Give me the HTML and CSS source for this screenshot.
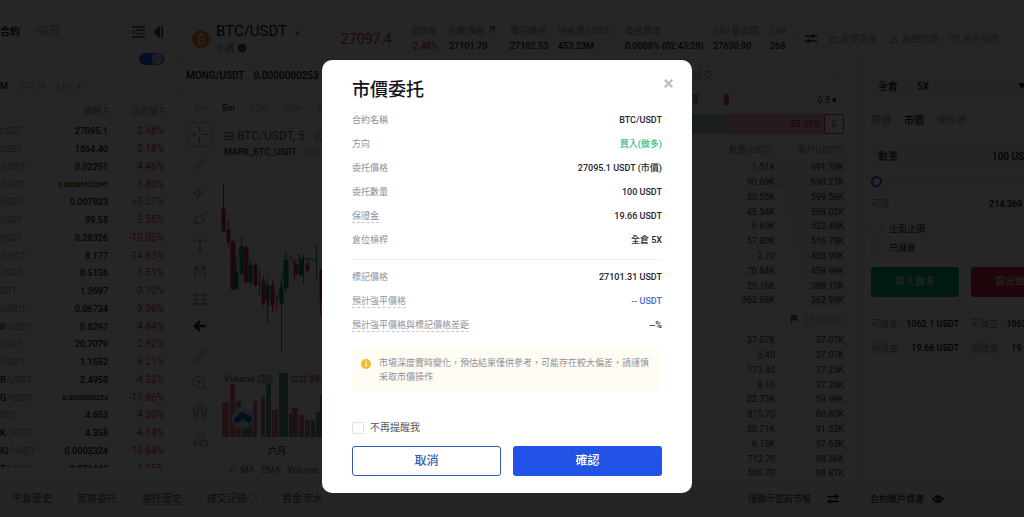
FILE: index.html
```
<!DOCTYPE html>
<html lang="zh-Hant">
<head>
<meta charset="utf-8">
<meta name="viewport" content="width=device-width, initial-scale=1">
<title>BTC/USDT</title>
<link rel="stylesheet" href="styles.css">
</head>
<body>
<div class="app">
  <div class="upper">
    <aside class="markets">
      <div class="markets-top">
        <b>合約</b><span class="muted">借貸</span>
        <svg class="icon push" width="13" height="12" viewBox="0 0 13 12" fill="none" stroke="currentColor" stroke-width="1.4"><path d="M0 1h13M5 4.3h8M5 7.6h8M0 11h13M3 4L0 6l3 2"/></svg>
        <svg class="icon" width="10" height="12" viewBox="0 0 10 12" fill="currentColor"><path d="M7 0v12L0 6zM8.400 0H10v12H8.400z"/></svg>
      </div>
      <div class="markets-switch"><input type="checkbox" class="switch" aria-label="合約列表" checked></div>
      <div class="markets-kinds"><b>M</b><span>BTC-M</span><span>LIVE ▾</span></div>
      <table class="market-table">
        <thead><tr><th></th><th>價格 <svg width="4" height="8" viewBox="0 0 4 8" fill="currentColor"><path d="M2 0l2 3H0zM2 8L0 5h4z"/></svg></th><th>漲跌幅 <svg width="4" height="8" viewBox="0 0 4 8" fill="currentColor"><path d="M2 0l2 3H0zM2 8L0 5h4z"/></svg></th></tr></thead>
        <tbody>
          <tr><td>USDT</td><td>27095.1</td><td>-2.48%</td></tr>
          <tr><td>USDT</td><td>1864.40</td><td>-2.18%</td></tr>
          <tr><td>/USDT</td><td>0.02251</td><td>-4.46%</td></tr>
          <tr><td>/USDT</td><td class="long">0.00000123395</td><td>-3.80%</td></tr>
          <tr><td>USDT</td><td>0.007923</td><td class="up">+5.37%</td></tr>
          <tr><td>USDT</td><td>89.58</td><td>-2.55%</td></tr>
          <tr><td>USDT</td><td>0.28326</td><td>-10.05%</td></tr>
          <tr><td>/USDT</td><td>8.177</td><td>-14.63%</td></tr>
          <tr><td>USDT</td><td>0.5136</td><td>-1.51%</td></tr>
          <tr><td>SDT</td><td>1.3697</td><td>-3.70%</td></tr>
          <tr><td>/USDT</td><td>0.06734</td><td>-3.36%</td></tr>
          <tr><td><b>II</b>/USDT</td><td>0.8297</td><td>-4.84%</td></tr>
          <tr><td>USDT</td><td>20.7079</td><td>-2.92%</td></tr>
          <tr><td>/USDT</td><td>1.1552</td><td>-6.21%</td></tr>
          <tr><td><b>R</b>/USDT</td><td>2.4950</td><td>-4.22%</td></tr>
          <tr><td><b>G</b>/USDT</td><td class="long">0.0000000253</td><td>-17.86%</td></tr>
          <tr><td>SDT</td><td>4.653</td><td>-4.20%</td></tr>
          <tr><td><b>K</b>/USDT</td><td>4.358</td><td>-4.14%</td></tr>
          <tr><td><b>IO</b>/USDT</td><td>0.0002324</td><td>-16.64%</td></tr>
          <tr><td><b>T</b>/USDT</td><td>0.071643</td><td>-6.25%</td></tr>
        </tbody>
      </table>
    </aside>

    <main class="workspace">
      <header class="ticker">
        <svg class="coin" width="18" height="18" viewBox="0 0 18 18"><circle cx="9" cy="9" r="9" fill="#f7931a"/><path d="M6.500 5h3.800a1.900 1.900 0 0 1 0 3.900H7.300m3 0a2.100 2.100 0 0 1 0 4.200H6M7.500 5v8M8.200 3.500V5M10 3.500V5M8 13v1.500M9.800 13v1.500" fill="none" stroke="#fff" stroke-width="1.300"/></svg>
        <div class="pair">
          <div class="pair-name">BTC/USDT <small>▾</small></div>
          <div class="pair-kind">永續 <svg width="8" height="8" viewBox="0 0 8 8"><circle cx="4" cy="4" r="4" fill="#333"/><path d="M4 1.500v1M4 3.500v3" stroke="#fff"/></svg></div>
        </div>
        <div class="last">27097.4</div>
        <dl class="stats">
          <div><dt>漲跌幅</dt><dd class="down">-2.48%</dd></div>
          <div><dt>指數價格 <svg width="8" height="8" viewBox="0 0 8 8" fill="none" stroke="#222"><path d="M1 7l6-6M2 1h5v5"/></svg></dt><dd>27101.70</dd></div>
          <div><dt>標記價格</dt><dd>27102.53</dd></div>
          <div><dt>持倉量(USDT)</dt><dd>453.23M</dd></div>
          <div><dt>資金費率</dt><dd>0.0088% (02:43:28)</dd></div>
          <div><dt>24H 最高價</dt><dd>27630.90</dd></div>
          <div><dt>24H</dt><dd>268</dd></div>
        </dl>
        <nav class="links">
          <span class="chevron">›</span>
          <svg class="icon" width="12" height="11" viewBox="0 0 12 11" fill="none" stroke="#333" stroke-width="1.400"><path d="M0 3h12M0 8h12M8 .5v5M4 5.500v5"/></svg>
          <a href="#"><svg width="8" height="8" viewBox="0 0 8 8" fill="none" stroke="currentColor"><path d="M.5 1v6.500h7V1M2.500.5v3h3v-3"/></svg>跟單交易</a>
          <a href="#"><svg width="9" height="8" viewBox="0 0 9 8" fill="none" stroke="currentColor"><path d="M4.500 1L8.300 7.500H.7zM4.500 3.500v2"/></svg>風險限額</a>
          <a href="#"><svg width="9" height="9" viewBox="0 0 9 9" fill="none" stroke="currentColor"><circle cx="4.500" cy="4.500" r="4"/><path d="M3 6l1-2.500L6.200 3 5.200 5z"/></svg>用戶指南</a>
        </nav>
      </header>

      <div class="panels">
        <section class="chart">
          <div class="notice"><span>MONG/USDT</span><span>0.0000000253</span></div>
          <div class="frames"><span>1m</span><b>5m</b><span>15m</span><span>30m</span><span>1h</span></div>
          <div class="chart-body">
            <div class="tools">
              <svg class="boxed" viewBox="0 0 24 24"><path d="M12 3v6M12 15v6M3 12h6M15 12h6"/></svg>
              <svg viewBox="0 0 24 24"><path d="M5 19L19 5"/></svg>
              <svg viewBox="0 0 24 24"><path d="M4 17L16 5M8 20L20 8M5 8l10 10M4 13l6 6"/></svg>
              <svg viewBox="0 0 24 24"><path d="M5 19l2-8 6-2 4 4-3 5zM14 9l5-5"/></svg>
              <svg viewBox="0 0 24 24"><path d="M6 8V6h12v2M12 6v13M9 19h6"/></svg>
              <svg viewBox="0 0 24 24"><path d="M5 19L8 6l4 7 4-7 3 13"/><circle cx="8" cy="6" r="1.500"/><circle cx="16" cy="6" r="1.500"/></svg>
              <svg viewBox="0 0 24 24"><path d="M3 7h18M3 13h18M3 18h18M7 4v15M17 4v15"/></svg>
              <svg class="strong" viewBox="0 0 24 24"><path d="M19 12H7M12 6l-6 6 6 6"/></svg>
              <svg class="ruled" viewBox="0 0 24 24"><path d="M4 17L17 4l3 3L7 20zM8 13l2 2M12 9l2 2"/></svg>
              <svg viewBox="0 0 24 24"><circle cx="11" cy="11" r="7"/><path d="M16 16l4 4M8 11h6M11 8v6"/></svg>
              <svg class="ruled" viewBox="0 0 24 24"><path d="M5 19V10a7 7 0 0 1 14 0v9h-4v-9a3 3 0 0 0-6 0v9zM5 15h4M15 15h4"/></svg>
              <svg viewBox="0 0 24 24"><path d="M4 19l1-5L15 4l3 3L8 17zM14 13h6v6h-8z"/></svg>
            </div>
            <div class="plot">
              <div class="legend">
                <div class="legend-pair">⊟ BTC/USDT, 5 <span>⊡</span></div>
                <div class="legend-mark">MARK_BTC_USDT <span>⊡⊡</span></div>
              </div>
              <svg class="candles" width="120" height="320" viewBox="213 120 120 320">
                <path d="M222 258H310M222 346H330M222 440H330" stroke="#e8e8ee" fill="none"/>
                <g stroke="#c92a45" fill="#c92a45">
                  <path d="M221.500 184v46M226.500 220v28M230.500 240v50M243.500 246v38M248.500 260v25M253.500 262v25M261.500 276v30M266.500 284v22M270.500 280v32M274.500 298v12M292.500 258v22M297.500 254v22M305.500 258v14M318.500 270v45"/>
                  <path d="M220 209h3v22h-3zM225 230h3v12h-3zM229 242h4v47h-4zM242 247h4v35h-4zM252 265h3v20h-3zM260 281h3v22h-3zM269 285h3v20h-3zM292 265h4v9h-4zM304 265h3v5h-3zM318 270h4v31h-4z"/>
                </g>
                <g stroke="#0b8a68" fill="#0b8a68">
                  <path d="M234.500 265v24M239.500 236v40M257.500 270v24M265.500 278v45M279.500 278v75M283.500 252v40M301.500 254v30M314.500 244v35"/>
                  <path d="M233 272h3v17h-3zM238 247h3v26h-3zM247 265h3v17h-3zM264 286h3v14h-3zM278 288h3v16h-3zM282 260h4v28h-4zM298 260h3v15h-3z"/>
                </g>
                <path d="M230 280L239 245L244 262L256 284L268 287L276 300L284 256H288L292 264L300 258L316 260" fill="none" stroke="#2684c8"/>
                <g fill="#d87a87">
                  <path d="M220 402h7v35h-7zM228 384h5v53h-5zM234 401h5v36h-5zM251 401h4v36h-4zM259 397h4v40h-4zM270 410h6v27h-6zM290 408h6v29h-6zM297 415h5v22h-5zM303 420h5v17h-5zM318 395h4v42h-4z"/>
                </g>
                <g fill="#5c9c8c"><path d="M240 412h10v25h-10zM264 383h5v54h-5zM277 373h9v64h-9zM287 414h3v23h-3zM309 420h4v17h-4zM314 412h4v25h-4z"/></g>
                <circle cx="241" cy="418" r="11" fill="#dfe4ee"/>
                <path d="M236 423a3.500 3.500 0 0 1-.5-7 5.500 5.500 0 0 1 10-1 4 4 0 0 1 1 8l-5.500-4z" fill="#1464c8"/>
              </svg>
              <div class="volume-label"><span>Volume (20)</span><span>⊡⊡ <b class="down">89.</b></span></div>
              <div class="month">六月</div>
              <div class="indicators"><span>&lt;</span><span>MA</span><span>EMA</span><span>Volume</span><span>MACD</span></div>
            </div>
          </div>
        </section>

        <section class="book">
          <div class="book-tabs"><span>成交</span><span>⋮</span></div>
          <div class="book-tools"><i class="sw green"></i><i class="sw"></i><span>0.5 ▾</span></div>
          <div class="ratio"><i></i><b>58.98%</b><em>S</em></div>
          <table class="book-table">
            <thead><tr><th>數量(USDT)</th><th>累計(USDT)</th></tr></thead>
            <tbody class="asks">
              <tr style="--depth:68px"><td>1.51K</td><td>691.78K</td></tr>
              <tr style="--depth:68px"><td>90.69K</td><td>690.27K</td></tr>
              <tr style="--depth:59px"><td>30.55K</td><td>599.58K</td></tr>
              <tr style="--depth:56px"><td>45.54K</td><td>569.02K</td></tr>
              <tr style="--depth:52px"><td>6.69K</td><td>523.48K</td></tr>
              <tr style="--depth:51px"><td>57.80K</td><td>516.79K</td></tr>
              <tr style="--depth:45px"><td>2.70</td><td>458.99K</td></tr>
              <tr style="--depth:45px"><td>70.84K</td><td>458.99K</td></tr>
              <tr style="--depth:38px"><td>25.16K</td><td>388.15K</td></tr>
              <tr style="--depth:36px"><td>362.98K</td><td>362.98K</td></tr>
            </tbody>
          </table>
          <div class="book-mark"><svg width="9" height="9" viewBox="0 0 9 9" fill="#666"><path d="M1 0h7L6.500 2.700 8 5.500H2V9H1z"/></svg>27102.53</div>
          <table class="book-table">
            <tbody class="bids">
              <tr><td>37.07K</td><td>37.07K</td></tr>
              <tr><td>5.40</td><td>37.07K</td></tr>
              <tr><td>173.40</td><td>37.25K</td></tr>
              <tr><td>8.10</td><td>37.26K</td></tr>
              <tr><td>22.73K</td><td>59.99K</td></tr>
              <tr><td>815.70</td><td>60.80K</td></tr>
              <tr><td>30.71K</td><td>91.52K</td></tr>
              <tr><td>6.13K</td><td>97.65K</td></tr>
              <tr><td>712.70</td><td>98.36K</td></tr>
              <tr><td>506.70</td><td>98.87K</td></tr>
            </tbody>
          </table>
        </section>

        <section class="trade">
          <form class="trade-form">
            <div class="mode"><b>全倉</b><i></i><b>5X</b><span>▼</span></div>
            <div class="order-kinds"><span>限價</span><b>市價</b><span>條件單</span></div>
            <label class="amount"><span>數量</span><input type="text" value="100 USDT"></label>
            <input class="slider" type="range" min="0" max="100" value="0" aria-label="倉位比例">
            <div class="pairline avail"><span>可用</span><b>214.369 USDT</b></div>
            <label class="opt"><input type="checkbox"><span>止盈止損</span></label>
            <label class="opt"><input type="checkbox"><span>只減倉</span></label>
            <div class="sides"><button type="button" class="buy">買入做多</button><button type="button" class="sell">賣出做空</button></div>
            <div class="limits">
              <div class="pairline"><span>可做多</span><b>1062.1 USDT</b></div>
              <div class="pairline"><span>可做空</span><b>1062.1 USDT</b></div>
              <div class="pairline"><u>保證金</u><b>19.66 USDT</b></div>
              <div class="pairline"><u>保證金</u><b>19.66 USDT</b></div>
            </div>
          </form>
        </section>
      </div>
    </main>
  </div>

  <footer class="dock">
    <nav class="dock-tabs"><span>平倉歷史</span><span>當前委托</span><u>委托歷史</u><span>成交記錄◇</span><span>資金流水</span></nav>
    <div class="dock-filter"><label><input type="checkbox">僅顯示當前市場</label>
      <svg width="12" height="10" viewBox="0 0 12 10" fill="none" stroke="#000" stroke-width="1.500"><path d="M0 2.500h12M0 7.500h12M9 0v5M3 5v5"/></svg>
    </div>
    <div class="dock-assets">合約賬戶資產
      <svg width="12" height="8" viewBox="0 0 12 8" fill="none" stroke="#000" stroke-width="1.300"><path d="M1 4q5-6.500 10 0-5 6.500-10 0z"/><circle cx="6" cy="4" r="1.500"/></svg>
    </div>
  </footer>
</div>

<div class="overlay">
  <section class="dialog" role="dialog" aria-modal="true" aria-labelledby="dialog-title">
    <button type="button" class="close" aria-label="關閉"><svg width="9" height="9" viewBox="0 0 9 9" fill="none" stroke="currentColor" stroke-width="2"><path d="M.7.7l7.600 7.600M8.300.7L.7 8.300"/></svg></button>
    <h1 id="dialog-title">市價委托</h1>
    <dl class="details">
      <div><dt>合約名稱</dt><dd>BTC/USDT</dd></div>
      <div><dt>方向</dt><dd class="buy-side">買入(做多)</dd></div>
      <div><dt>委托價格</dt><dd>27095.1 USDT (市價)</dd></div>
      <div><dt>委托數量</dt><dd>100 USDT</dd></div>
      <div><dt><span class="hint">保證金</span></dt><dd>19.66 USDT</dd></div>
      <div><dt>倉位槓桿</dt><dd>全倉 5X</dd></div>
    </dl>
    <dl class="details estimate">
      <div><dt>標記價格</dt><dd>27101.31 USDT</dd></div>
      <div><dt><span class="hint">預計強平價格</span></dt><dd class="link">-- USDT</dd></div>
      <div><dt><span class="hint">預計強平價格與標記價格差距</span></dt><dd>--%</dd></div>
    </dl>
    <div class="warning">
      <svg width="10" height="10" viewBox="0 0 10 10"><circle cx="5" cy="5" r="5" fill="#f5b92e"/><path d="M5 2v1.200M5 4.200V8" stroke="#fff" stroke-width="1.200"/></svg>
      <p>市場深度實時變化，預估結果僅供參考，可能存在較大偏差，請謹慎采取市價操作</p>
    </div>
    <label class="remember"><input type="checkbox">不再提醒我</label>
    <div class="actions"><button type="button" class="cancel">取消</button><button type="button" class="confirm">確認</button></div>
  </section>
</div>
</body>
</html>
```
FILE: styles.css
```
* { box-sizing: border-box; }
body, h1, dl, dd, p { margin: 0; }
body {
  height: 100vh;
  overflow: hidden;
  font: 9px/12px Roboto, "Noto Sans CJK TC", sans-serif;
  color: #111;
  background: #fff;
}
button, input { font: inherit; color: inherit; }
b { font-weight: 500; }
svg { flex: none; }
a { color: inherit; text-decoration: none; }
u { text-decoration: underline dotted; text-underline-offset: 2px; }
table { border-collapse: collapse; table-layout: fixed; }
td, th { padding: 0; text-align: right; white-space: nowrap; font-weight: 400; }
input[type="checkbox"] {
  appearance: none;
  flex: none;
  width: 12px;
  height: 12px;
  margin: 0;
  border: 1px solid #dfe1e8;
  border-radius: 1px;
}
.muted { color: #a4a6b2; }
.down { color: #d02c48; }

/* page */
.app { display: flex; flex-direction: column; height: 100vh; padding-top: 18px; white-space: nowrap; }
.upper { flex: 1; display: flex; min-height: 0; }

/* market list */
.markets { flex: 0 0 179px; overflow: hidden; margin-bottom: 12px; }
.markets-top { display: flex; align-items: center; height: 28px; gap: 8px; padding-right: 16px; font-size: 11px; }
.markets-top b { font-size: 10px; font-weight: 700; }
.markets-top .muted { margin-left: 10px; }
.push { margin-left: auto; }
.icon { color: #444; }
.markets-switch { display: flex; justify-content: flex-end; align-items: center; height: 26px; padding-right: 15px; }
input.switch { width: 25px; height: 12px; border: 0; border-radius: 6px; background: radial-gradient(circle at 18px 6px, #c4cee8 5px, #1b57ee 6px); }
.markets-kinds { display: flex; align-items: center; gap: 11px; height: 28px; color: #a4a6b2; }
.markets-kinds b { color: #111; }
.market-table { width: 164px; }
.market-table th { height: 22px; color: #888b99; }
.market-table th:nth-child(1) { width: 38px; }
.market-table th:nth-child(2) { width: 70px; }
.market-table td { height: 18px; line-height: 12px; }
.market-table tr:nth-child(4n) td { height: 17px; }
.market-table td:nth-child(1) { text-align: left; color: #8e919d; }
.market-table td:nth-child(1) b { color: #111; }
.market-table td:nth-child(2) { font-weight: 500; }
.market-table td:nth-child(3) { font-size: 10px; color: #d02c48; }
.market-table tr > td.up { color: #0b9b74; }
.market-table tr > td.long { font-size: 7px; }

/* ticker */
.workspace { flex: 1; min-width: 0; display: flex; flex-direction: column; border-left: 1px solid #ececf2; }
.ticker { display: flex; align-items: center; height: 42px; padding-left: 12px; border-bottom: 1px solid #ececf2; overflow: hidden; flex: none; }
.pair { margin-left: 6px; width: 125px; }
.pair-name { font-size: 15px; line-height: 17px; }
.pair-name small { font-size: 9px; color: #777; margin-left: 4px; }
.pair-kind { display: flex; align-items: center; gap: 4px; line-height: 12px; color: #888b99; }
.last { width: 69px; font-size: 14px; color: #d02c48; }
.stats { display: grid; grid-template-columns: 39px 61px 48px 67px 88px 57px 16px; overflow: hidden; }
.stats dt { line-height: 14px; color: #888b99; }
.stats dd { line-height: 16px; font-weight: 500; }
.links { display: flex; align-items: center; gap: 13px; padding-left: 6px; color: #888b99; }
.links a { display: flex; align-items: center; gap: 3px; }
.chevron { width: 4px; margin-right: -4px; font-size: 12px; }

.panels { flex: 1; display: flex; min-height: 0; }

/* chart */
.chart { flex: 1; min-width: 0; overflow: hidden; }
.notice { display: flex; align-items: center; gap: 9px; height: 33px; padding-left: 6px; border-bottom: 1px solid #ececf2; font-size: 10px; font-weight: 500; }
.frames { display: flex; align-items: center; gap: 15px; height: 29px; padding-left: 14px; color: #a4a6b2; }
.frames b { color: #111; }
.chart-body { display: flex; }
.tools { flex: 0 0 34px; display: flex; flex-direction: column; align-items: center; gap: 7px; padding-right: 2px; border-right: 1px solid #f3f3f6; padding-left: 7px; }
.tools svg { width: 20px; height: 20px; fill: none; stroke: #777a85; stroke-width: 1.2; }
.tools .boxed { width: 25px; height: 25px; border: 1px solid #c8cad2; border-radius: 2px; }
.tools .strong { stroke: #222; stroke-width: 3; }
.tools .ruled { margin-top: 3px; }
.plot { position: relative; flex: 1; overflow: hidden; }
.candles { display: block; margin-top: -2px; }
.legend { position: absolute; top: 6px; left: 9px; }
.legend-pair { font-size: 12px; line-height: 16px; color: #555; }
.legend-mark { line-height: 16px; font-weight: 500; color: #333; }
.legend span { color: #999; margin-left: 6px; }
.volume-label { position: absolute; top: 251px; left: 9px; display: flex; gap: 18px; color: #444; }
.month { padding: 5px 0 0 53px; }
.indicators { display: flex; gap: 7px; padding: 7px 0 0 14px; color: #555; }

/* order book */
.book { flex: 0 0 178px; padding: 0 13px 0 8px; border-right: 1px solid #e6e6f0; display: flex; flex-direction: column; }
.book-tabs, .book-tools { display: flex; justify-content: space-between; align-items: center; color: #a4a6b2; }
.book-tabs { height: 34px; padding: 1px 4px 0 5px; font-size: 10px; }
.book-tools { height: 18px; gap: 26px; padding-right: 7px; color: #111; }
.book-tools span { margin-left: auto; }
.sw { width: 5px; height: 11px; margin-left: 5px; background: #c8606e; }
.sw.green { background: #7db0a4; }
.book-tools .sw + .sw { margin-left: 0; }
.ratio { display: flex; align-items: stretch; height: 20px; margin-top: 6px; line-height: 20px; background: linear-gradient(to right, #a8d0c5 36px, #ecb4bc 38px); color: #d02c48; }
.ratio i { flex: 1; }
.ratio b { margin-right: 4px; }
.ratio em { width: 20px; line-height: 18px; text-align: center; font-style: normal; border: 1px solid #d02c48; border-radius: 2px; background: #fff; }
.book-table { width: 100%; color: #333; }
.book-table th { height: 25px; line-height: 12px; padding-top: 8px; padding-bottom: 2px; color: #888b99; }
.book-table td { height: 15px; line-height: 12px; }
.book-table tr:nth-child(5n) td { height: 14px; }
.book-table tr > :first-child { width: 87px; }
.asks tr { background: linear-gradient(#fceef1, #fceef1) right / var(--depth) 100% no-repeat; }
.book-mark { display: flex; justify-content: flex-end; align-items: center; gap: 5px; height: 27px; padding-right: 2px; color: #a4a6b2; }

/* order form */
.trade { flex: 0 0 166px; overflow: hidden; padding-left: 3px; border-left: 1px solid #ececf2; }
.trade-form { width: 206px; padding: 18px 9px 0; }
.mode, .amount { display: flex; align-items: center; background: #f3f4f9; padding: 0 7px; }
.mode { height: 18px; gap: 9px; font-size: 10px; }
.mode i { width: 1px; height: 8px; background: #d0d2da; }
.mode span { margin-left: auto; padding-right: 26px; font-size: 8px; }
.order-kinds { display: flex; gap: 13px; padding: 19px 0 17px; font-size: 10px; color: #888b99; }
.order-kinds b { color: #111; }
.amount { height: 26px; justify-content: space-between; font-size: 10px; }
.amount input { width: 60px; padding: 0; border: 0; background: none; font-weight: 500; }
.slider { appearance: none; display: block; width: 100%; height: 12px; margin: 5px 0 0; background: linear-gradient(#e4e6ee, #e4e6ee) center / 100% 2px no-repeat; }
.slider::-webkit-slider-thumb { appearance: none; width: 11px; height: 11px; border: 2px solid #2354e6; border-radius: 50%; background: #fff; }
.pairline { display: flex; justify-content: space-between; color: #888b99; }
.pairline b { color: #111; }
.avail { padding: 11px 12px 9px 0; }
.opt { display: flex; align-items: center; gap: 6px; height: 19px; }
.sides { display: grid; grid-template-columns: 1fr 1fr; gap: 12px; margin-top: 10px; }
.sides button { height: 30px; border: 0; border-radius: 3px; padding: 0; color: #fff; font-size: 10px; }
.buy { background: #0fa872; }
.sell { background: #d02c48; }
.limits { display: grid; grid-template-columns: 1fr 1fr; gap: 12px; margin-top: 21px; }

/* bottom dock */
.dock { display: flex; align-items: center; height: 37px; flex: none; background: #f7f7fb; font-size: 10px; color: #333; }
.dock-tabs { display: flex; gap: 25px; padding-left: 12px; flex: 1; color: #555; }
.dock-filter { display: flex; align-items: center; gap: 16px; }
.dock-filter label { display: flex; align-items: center; gap: 4px; font-size: 9px; }
.dock-filter input[type="checkbox"] { width: 8px; height: 8px; }
.dock-assets { display: flex; align-items: center; gap: 8px; flex: 0 0 185px; padding-left: 31px; font-size: 9px; font-weight: 500; }

/* dialog */
.overlay { position: fixed; inset: 0; display: flex; justify-content: center; align-items: flex-start; padding: 60px 10px 0 0; background: rgba(0, 0, 0, .85); }
.dialog { position: relative; width: 370px; padding: 17px 30px; border-radius: 10px; background: #fff; }
.dialog h1 { margin-bottom: 5px; font-size: 18px; line-height: 26px; font-weight: 500; color: #11131f; }
.close { position: absolute; top: 19px; right: 19px; padding: 0; border: 0; background: none; line-height: 0; color: #b9bbcb; }
.details > div { display: flex; justify-content: space-between; line-height: 24px; }
.details dt { color: #8d909c; }
.details dd { color: #22242e; font-weight: 500; }
.details dd.buy-side { color: #2fb882; }
.details dd.link { color: #3f6cc0; }
.hint { padding-bottom: 1px; border-bottom: 1px dashed #c3c6d0; }
.estimate { margin-top: 7px; padding-top: 5px; border-top: 1px solid #eeeff2; }
.warning { display: flex; gap: 8px; margin-top: 11px; padding: 8px 8px 8px 9px; border-radius: 2px; background: #fffcf3; }
.warning svg { margin-top: 3px; }
.warning p { line-height: 14px; color: #8d909c; }
.remember { display: flex; align-items: center; gap: 6px; height: 16px; margin-top: 28px; font-size: 10px; color: #555863; }
.actions { display: grid; grid-template-columns: 1fr 1fr; gap: 12px; margin-top: 10px; }
.actions button { height: 30px; padding: 0; border-radius: 3px; font-size: 12px; font-weight: 500; }
.cancel { border: 1px solid #315bb2; background: #fff; color: #315bb2; }
.confirm { border: 0; background: #2352e6; color: #fff; }
```
